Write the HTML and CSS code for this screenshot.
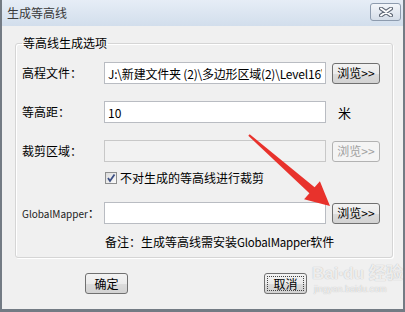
FILE: index.html
```html
<!DOCTYPE html>
<html lang="zh-CN">
<head>
    <meta charset="UTF-8">
    <title>生成等高线</title>
    <link rel="stylesheet" href="styles.css">
</head>
<body>

<div class="window">
    <div class="titlebar">
        <span class="title">生成等高线</span>
        <span class="close">
            <svg width="14" height="10" viewBox="0 0 14 10">
                <path d="M2 1.5 L12 8.5 M12 1.5 L2 8.5" stroke="#5d6674" stroke-width="4" stroke-linecap="round"/>
                <path d="M2 1.5 L12 8.5 M12 1.5 L2 8.5" stroke="#ffffff" stroke-width="2" stroke-linecap="round"/>
            </svg>
        </span>
    </div>

    <div class="client">
        <fieldset class="group">
            <legend>等高线生成选项</legend>

            <div class="row">
                <label class="lbl" for="dem">高程文件：</label>
                <input class="field path" type="text" id="dem" value="J:\新建文件夹 (2)\多边形区域(2)\Level16\等高线.tif">
                <button class="btn browse" type="button">浏览&gt;&gt;</button>
            </div>

            <div class="row gap">
                <label class="lbl" for="step">等高距：</label>
                <input class="field" type="text" id="step" value="10">
                <span class="unit">米</span>
            </div>

            <div class="row gap">
                <label class="lbl" for="clip">裁剪区域：</label>
                <input class="field" type="text" id="clip" disabled>
                <button class="btn browse" type="button" disabled>浏览&gt;&gt;</button>
            </div>

            <div class="check-row">
                <span class="check">
                    <svg width="12" height="12" viewBox="0 0 12 12">
                        <path d="M3 6 L5 9 L9.5 2.5" fill="none" stroke="#3c4f84" stroke-width="1.8"/>
                    </svg>
                </span>
                <span>不对生成的等高线进行裁剪</span>
            </div>

            <div class="row gap">
                <label class="lbl" for="gm"><span class="latin-sm">GlobalMapper</span>：</label>
                <input class="field" type="text" id="gm">
                <button class="btn browse" type="button">浏览&gt;&gt;</button>
            </div>

            <p class="note">备注：生成等高线需安装<span class="latin">GlobalMapper</span>软件</p>
        </fieldset>

        <div class="actions">
            <button class="btn action" type="button">确定</button>
            <button class="btn action focused" type="button">取消</button>
        </div>
    </div>
</div>

<svg class="arrow" width="405" height="312" viewBox="0 0 405 312">
    <polygon points="249.7,134.2 314.6,187.2 319.9,181.2 330,206 304.1,199.2 309.4,193.2 248.3,135.8" fill="#e8322c"/>
</svg>

<div class="watermark">
    <span class="wm-logo">Bai<span class="paw">●</span>du 经验</span>
    <span class="wm-url">jingyan.baidu.com</span>
</div>

</body>
</html>
```

FILE: styles.css
```css
body {
    margin: 0;
    background-color: #f0f0f0;
    font-family: "Noto Sans CJK SC", "Liberation Sans", sans-serif;
    font-size: 12px;
    color: #000;
}
.window {
    width: 405px;
    height: 312px;
    box-sizing: border-box;
    background-color: #f0f0f0;
    border-left: 2px solid #737b84;
    border-right: 2px solid #737b84;
    border-bottom: 3px solid #737b84;
    overflow: hidden;
}
.titlebar {
    display: flex;
    align-items: center;
    justify-content: space-between;
    height: 26px;
    padding: 0 2px 0 5px;
    background: linear-gradient(#e6edf6, #d2deec);
}
.title {
    font-size: 12px;
    color: #3a3a3a;
    line-height: 16px;
}
.close {
    display: flex;
    align-items: center;
    justify-content: center;
    width: 29px;
    height: 16px;
    margin-top: -2px;
    border: 1px solid #8d9bae;
    border-radius: 3px;
    background: linear-gradient(#f3f6fa, #d5dde8);
}
.client {
    padding-top: 9px;
}
.group {
    width: 378px;
    box-sizing: border-box;
    margin: 0 0 0 13px;
    padding: 11px 0 7px 6px;
    border: 1px solid #d5d5d5;
    border-radius: 3px;
    box-shadow: inset 1px 1px 0 #fff, 1px 1px 0 #fff;
}
.group legend {
    padding: 0 1px;
    line-height: 16px;
    font-size: 12px;
}
.row {
    display: flex;
    align-items: center;
    height: 22px;
}
.row.gap {
    margin-top: 17px;
}
.lbl {
    width: 82px;
    line-height: 16px;
}
.latin-sm {
    font-size: 10px;
    color: #222;
}
.latin {
    font-size: 11.5px;
    letter-spacing: -0.2px;
}
.field {
    width: 222px;
    height: 22px;
    box-sizing: border-box;
    margin: 0;
    padding: 0 3px;
    border: 1px solid #b9bcc2;
    background-color: #fff;
    font-family: "Noto Sans CJK SC", "Liberation Sans", sans-serif;
    font-size: 12px;
    color: #000;
    outline: none;
}
.field.path {
    letter-spacing: -0.2px;
}
.field:disabled {
    background-color: #f2f2f2;
    border-color: #c8c8c8;
}
.btn {
    box-sizing: border-box;
    margin: 0;
    padding: 0;
    border: 1px solid #707070;
    border-radius: 3px;
    background: linear-gradient(#f3f3f3 0%, #ebebeb 50%, #dcdcdc 51%, #d2d2d2 100%);
    font-family: "Noto Sans CJK SC", "Liberation Sans", sans-serif;
    font-size: 12px;
    line-height: 16px;
    color: #000;
}
.browse {
    width: 48px;
    height: 21px;
    margin-left: 6px;
}
.browse:disabled {
    border-color: #b2b2b2;
    background: #f4f4f4;
    color: #a0a0a0;
}
.unit {
    margin-left: 12px;
    font-size: 13px;
}
.check-row {
    display: flex;
    align-items: center;
    height: 14px;
    margin-top: 9px;
    padding-left: 83px;
    line-height: 16px;
}
.check {
    display: flex;
    width: 12px;
    height: 12px;
    box-sizing: border-box;
    margin-right: 3px;
    border: 1px solid #8e8f8f;
    background: linear-gradient(135deg, #dcdcdc, #fbfbfb);
}
.check svg {
    margin: -1px;
}
.note {
    margin: 10px 0 0 0;
    padding-left: 83px;
    line-height: 16px;
}
.actions {
    display: flex;
    margin-top: 15px;
    padding-left: 83px;
}
.action {
    width: 43px;
    height: 21px;
}
.action.focused {
    margin-left: 136px;
    outline: 1px dotted #444;
    outline-offset: -4px;
}
.arrow {
    position: absolute;
    top: 0;
    left: 0;
    pointer-events: none;
}
.watermark {
    position: absolute;
    left: 312px;
    top: 264px;
    display: flex;
    flex-direction: column;
    white-space: nowrap;
    color: rgba(255, 255, 255, 0.8);
    text-shadow: 0 0 1px rgba(0, 0, 0, 0.3);
    pointer-events: none;
}
.wm-logo {
    font-family: "Liberation Sans", "Noto Sans CJK SC", sans-serif;
    font-size: 17px;
    font-weight: bold;
    line-height: 20px;
}
.paw {
    font-size: 8px;
    vertical-align: top;
}
.wm-url {
    font-family: "Liberation Sans", sans-serif;
    font-size: 9px;
    line-height: 11px;
    padding-left: 2px;
}
```
